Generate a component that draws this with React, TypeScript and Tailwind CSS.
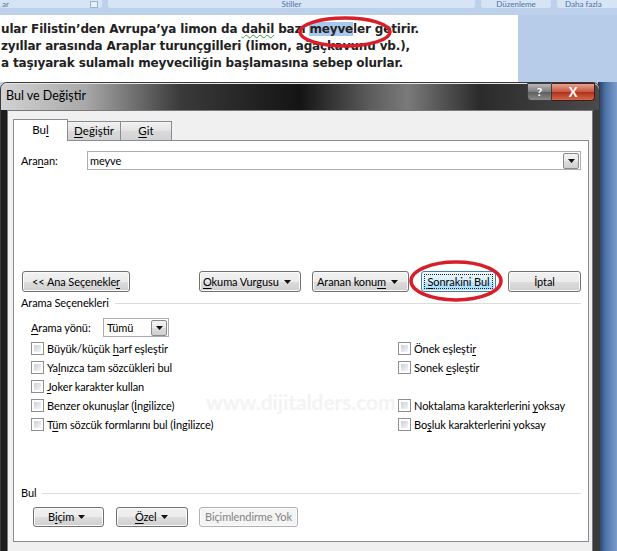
import type { ReactNode } from "react";

const ui = { fontFamily: 'Lato, "Open Sans", sans-serif' };

function Arrow({ className = "" }: { className?: string }) {
  return (
    <svg width="7" height="4" viewBox="0 0 7 4" className={`shrink-0 ${className}`} aria-hidden="true">
      <path d="M0 0H7L3.5 4Z" fill="#111" />
    </svg>
  );
}

function Btn({
  children,
  w,
  primary,
  disabled,
  className = "",
}: {
  children: ReactNode;
  w: string;
  primary?: boolean;
  disabled?: boolean;
  className?: string;
}) {
  const skin = primary
    ? "border-[#3c7fb1] bg-[linear-gradient(to_bottom,#eaf6fd_0%,#d9f0fc_50%,#bee6fd_51%,#a7d9f5_100%)]"
    : disabled
      ? "border-[#adb2b5] bg-[#f4f4f4] text-[#838383]"
      : "border-[#707070] bg-[linear-gradient(to_bottom,#f2f2f2_0%,#ebebeb_50%,#dddddd_51%,#cfcfcf_100%)]";
  return (
    <div
      className={`flex h-full shrink-0 items-center justify-center whitespace-nowrap rounded-[3px] border p-[2px] shadow-[inset_0_0_0_1px_#fbfbfb] ${skin} ${w} ${className}`}
    >
      {primary ? (
        <div className="flex h-full w-full items-center justify-center border border-dotted border-[#222]">{children}</div>
      ) : (
        children
      )}
    </div>
  );
}

function Check({ children }: { children: ReactNode }) {
  return (
    <div className="flex h-[19px] items-center gap-[3px] whitespace-nowrap">
      <div className="h-[13px] w-[13px] shrink-0 border border-[#8e8f8f] bg-white p-[2px]">
        <div className="h-full w-full bg-[linear-gradient(135deg,#cbcfd5,#f6f6f6)]" />
      </div>
      <span>{children}</span>
    </div>
  );
}

function DropBtn() {
  return (
    <div className="flex h-full w-[16px] items-center justify-center rounded-[2px] border border-[#8a8a8a] bg-[linear-gradient(to_bottom,#f2f2f2_0%,#ebebeb_50%,#dddddd_51%,#cfcfcf_100%)]">
      <Arrow />
    </div>
  );
}

const u = "underline underline-offset-[2px] decoration-1";

export default function App() {
  return (
    <div className="relative h-[551px] w-[617px] overflow-hidden bg-[#bdd1ec]" style={ui}>
      {/* ribbon bottom edge */}
      <div className="flex h-[9px] items-start gap-[6px] text-[8px] leading-[8px] text-[#4f73a8]">
        <div className="flex h-[8px] w-[102px] items-center justify-between rounded-b-[3px] bg-[#d6e4f5] pl-[2px] pr-[4px]">
          <span>ar</span>
          <span className="h-[7px] w-[8px] border border-[#9bb4d6] bg-[#e7effa]" />
        </div>
        <div className="flex h-[8px] w-[367px] items-center justify-center rounded-b-[3px] bg-[#d6e4f5]">
          <span>Stiller</span>
        </div>
        <div className="flex h-[8px] w-[70px] items-center justify-center rounded-b-[3px] bg-[#d6e4f5]">
          <span>Düzenleme</span>
        </div>
        <div className="flex h-[8px] flex-1 items-center justify-start rounded-bl-[3px] bg-[#d6e4f5] pl-[8px]">
          <span className="whitespace-nowrap">Daha fazla</span>
        </div>
      </div>

      {/* document page */}
      <div className="mt-[6px] flex h-[67px]">
        <div
          className="w-[518px] bg-white pt-[6px] pl-px text-[12px] font-bold leading-[17px] tracking-[-0.15px] text-[#222]"
          style={{ fontFamily: '"DejaVu Sans", Verdana, sans-serif' }}
        >
          <div className="whitespace-nowrap">
            ular Filistin’den Avrupa’ya limon da{" "}
            <span className="underline decoration-wavy decoration-[#3a9a3a] decoration-1">dahil</span> bazı{" "}
            <span className="bg-[#a8c8ee]">meyve</span>ler getirir.
          </div>
          <div className="whitespace-nowrap">zyıllar arasında Araplar turunçgilleri (limon, ağaçkavunu vb.),</div>
          <div className="whitespace-nowrap">a taşıyarak sulamalı meyveciliğin başlamasına sebep olurlar.</div>
        </div>
        <div className="flex-1 bg-[#b7cce9]" />
      </div>

      {/* red mark around the word */}
      <svg className="absolute left-[296px] top-[15px]" width="98" height="34" viewBox="0 0 98 34" aria-hidden="true">
        <ellipse cx="49" cy="17" rx="45" ry="14" fill="none" stroke="#d81e2a" strokeWidth="3.5" />
      </svg>

      {/* right backdrop beside the dialog */}
      <div className="absolute left-[598px] top-[82px] h-[469px] w-[19px] bg-[linear-gradient(to_right,#22385e,#4f73a8_40%,#7a9bcb)]" />

      {/* dialog window */}
      <div className="absolute left-0 top-[82px] flex h-[480px] w-[600px] flex-col rounded-t-[7px] border border-[#3a3a3a] bg-[linear-gradient(to_right,#1c1c1c_0%,#2a2a2a_50%,#3a3a3a_100%)]">
        <div className="flex h-[27px] shrink-0 items-start rounded-t-[6px] bg-[linear-gradient(to_right,#d2d2d2_0%,#a9a9a9_14%,#3a3a3a_30%,#141414_50%,#5e5e5e_62%,#7a7a7a_68%,#2b2b2b_80%,#4a4a4a_100%)] shadow-[inset_0_1px_0_#e6e6e6]">
          <span className="pl-[5px] pt-[6px] text-[12.5px] leading-[14px] text-black">Bul ve Değiştir</span>
          <div className="ml-auto mr-[4px] flex h-[18px]">
            <div className="flex w-[25px] items-center justify-center rounded-bl-[4px] border border-[#3d3d3d] bg-[linear-gradient(to_bottom,#b9b9b9,#7c7c7c_50%,#5e5e5e_51%,#8a8a8a)] text-[12px] font-bold leading-none text-white">
              ?
            </div>
            <div className="flex w-[43px] items-center justify-center rounded-br-[4px] border border-l-0 border-[#4a1a1a] bg-[linear-gradient(to_bottom,#e6a493,#c7543e_50%,#b0301b_51%,#d06a4c)] text-[13px] font-bold leading-none text-white">
              X
            </div>
          </div>
        </div>

        <div className="mx-[6px] flex flex-1 flex-col border border-[#7a7a7a] bg-[#f0f0f0] pl-[5px] pr-[3px]">
          {/* tabs */}
          <div className="flex h-[29px] shrink-0 items-end text-[11.5px]">
            <div className="relative z-10 -mb-px flex h-[22px] w-[55px] items-center justify-center border border-b-0 border-[#898c95] bg-white pb-[2px]">
              Bu<span className={u}>l</span>
            </div>
            <div className="flex h-[19px] w-[53px] items-center justify-center border border-l-0 border-b-0 border-[#898c95] bg-[linear-gradient(to_bottom,#f2f2f2,#e3e3e3_50%,#d9d9d9_51%,#d3d3d3)]">
              <span className={u}>D</span>eğiştir
            </div>
            <div className="flex h-[19px] w-[51px] items-center justify-center border border-l-0 border-b-0 border-[#898c95] bg-[linear-gradient(to_bottom,#f2f2f2,#e3e3e3_50%,#d9d9d9_51%,#d3d3d3)]">
              <span className={u}>G</span>it
            </div>
          </div>

          {/* panel */}
          <div className="flex h-[402px] shrink-0 flex-col border border-[#898c95] bg-white pl-[7px] pr-[7px] text-[11px] leading-[14px] tracking-[-0.1px] text-black">
            <div className="mt-[10px] flex h-[19px] items-center">
              <span className="w-[66px]">
                Ara<span className={u}>n</span>an:
              </span>
              <div className="flex h-full flex-1 items-center border border-[#abadb3] bg-white pl-[2px] pr-px">
                <span className="flex-1">meyve</span>
                <div className="h-[16px]">
                  <DropBtn />
                </div>
              </div>
            </div>

            <div className="mt-[101px] flex h-[21px] items-stretch">
              <Btn w="w-[108px] ml-[1px]">
                {"<< Ana Seçenekle"}
                <span className={u}>r</span>
              </Btn>
              <Btn w="w-[102px] ml-auto" className="justify-start pl-[3px]">
                <span>
                  <span className={u}>O</span>kuma Vurgusu
                </span>
                <Arrow className="ml-auto mr-[7px]" />
              </Btn>
              <Btn w="w-[97px] ml-[11px]" className="justify-start pl-[4px]">
                <span>
                  Aranan konu<span className={u}>m</span>
                </span>
                <Arrow className="ml-auto mr-[8px]" />
              </Btn>
              <Btn w="w-[75px] ml-[12px]" primary>
                <span>
                  <span className={u}>S</span>onrakini Bul
                </span>
              </Btn>
              <Btn w="w-[73px] ml-[12px]">İptal</Btn>
            </div>

            <div className="mt-[4px] flex h-[14px] items-center">
              <span>Arama Seçenekleri</span>
              <div className="ml-[6px] h-px flex-1 bg-[#dcdcdc]" />
            </div>

            <div className="mt-[8px] flex h-[19px] items-center pl-[10px]">
              <span className="w-[72px] whitespace-nowrap">
                <span className={u}>A</span>rama yönü:
              </span>
              <div className="flex h-full w-[66px] items-center border border-[#abadb3] bg-white pl-[3px] pr-px">
                <span className="flex-1">Tümü</span>
                <div className="h-[16px]">
                  <DropBtn />
                </div>
              </div>
            </div>

            <div className="mt-[2px] grid grid-cols-[367px_1fr] pl-[10px]">
              <Check>
                Büyük/küçük <span className={u}>h</span>arf eşleştir
              </Check>
              <Check>
                Önek eşleşti<span className={u}>r</span>
              </Check>
              <Check>
                Ya<span className={u}>l</span>nızca tam sözcükleri bul
              </Check>
              <Check>
                Sonek <span className={u}>e</span>şleştir
              </Check>
              <Check>
                <span className={u}>J</span>oker karakter kullan
              </Check>
              <div />
              <div className="relative">
                <span className="absolute left-[175px] top-[-5px] whitespace-nowrap text-[21px] font-bold leading-none text-[#f3f3f3]">
                  www.dijitalders.com
                </span>
                <div className="relative">
                  <Check>
                    Benzer okunuşlar (<span className={u}>İ</span>ngilizce)
                  </Check>
                </div>
              </div>
              <Check>
                Noktalama karakterlerini <span className={u}>y</span>oksay
              </Check>
              <Check>
                T<span className={u}>ü</span>m sözcük formlarını bul (İngilizce)
              </Check>
              <Check>
                Bo<span className={u}>ş</span>luk karakterlerini yoksay
              </Check>
            </div>

            <div className="mt-[52px] flex h-[14px] items-center">
              <span>Bul</span>
              <div className="ml-[6px] h-px flex-1 bg-[#dcdcdc]" />
            </div>

            <div className="mt-[7px] flex h-[20px] items-stretch pl-[12px]">
              <Btn w="w-[71px]">
                <span className="ml-[12px]">
                  B<span className={u}>i</span>çim
                </span>
                <Arrow className="ml-auto mr-[16px]" />
              </Btn>
              <Btn w="w-[72px] ml-[12px]">
                <span className="ml-[16px]">
                  <span className={u}>Ö</span>zel
                </span>
                <Arrow className="ml-auto mr-[17px]" />
              </Btn>
              <Btn w="w-[99px] ml-[11px]" disabled>
                Biçimlendirme Yok
              </Btn>
            </div>
          </div>
        </div>
      </div>

      {/* red mark around the button */}
      <svg className="absolute left-[408px] top-[259px]" width="96" height="44" viewBox="0 0 96 44" aria-hidden="true">
        <ellipse cx="48" cy="22" rx="45" ry="19" fill="none" stroke="#d81e2a" strokeWidth="3.5" />
      </svg>
    </div>
  );
}
